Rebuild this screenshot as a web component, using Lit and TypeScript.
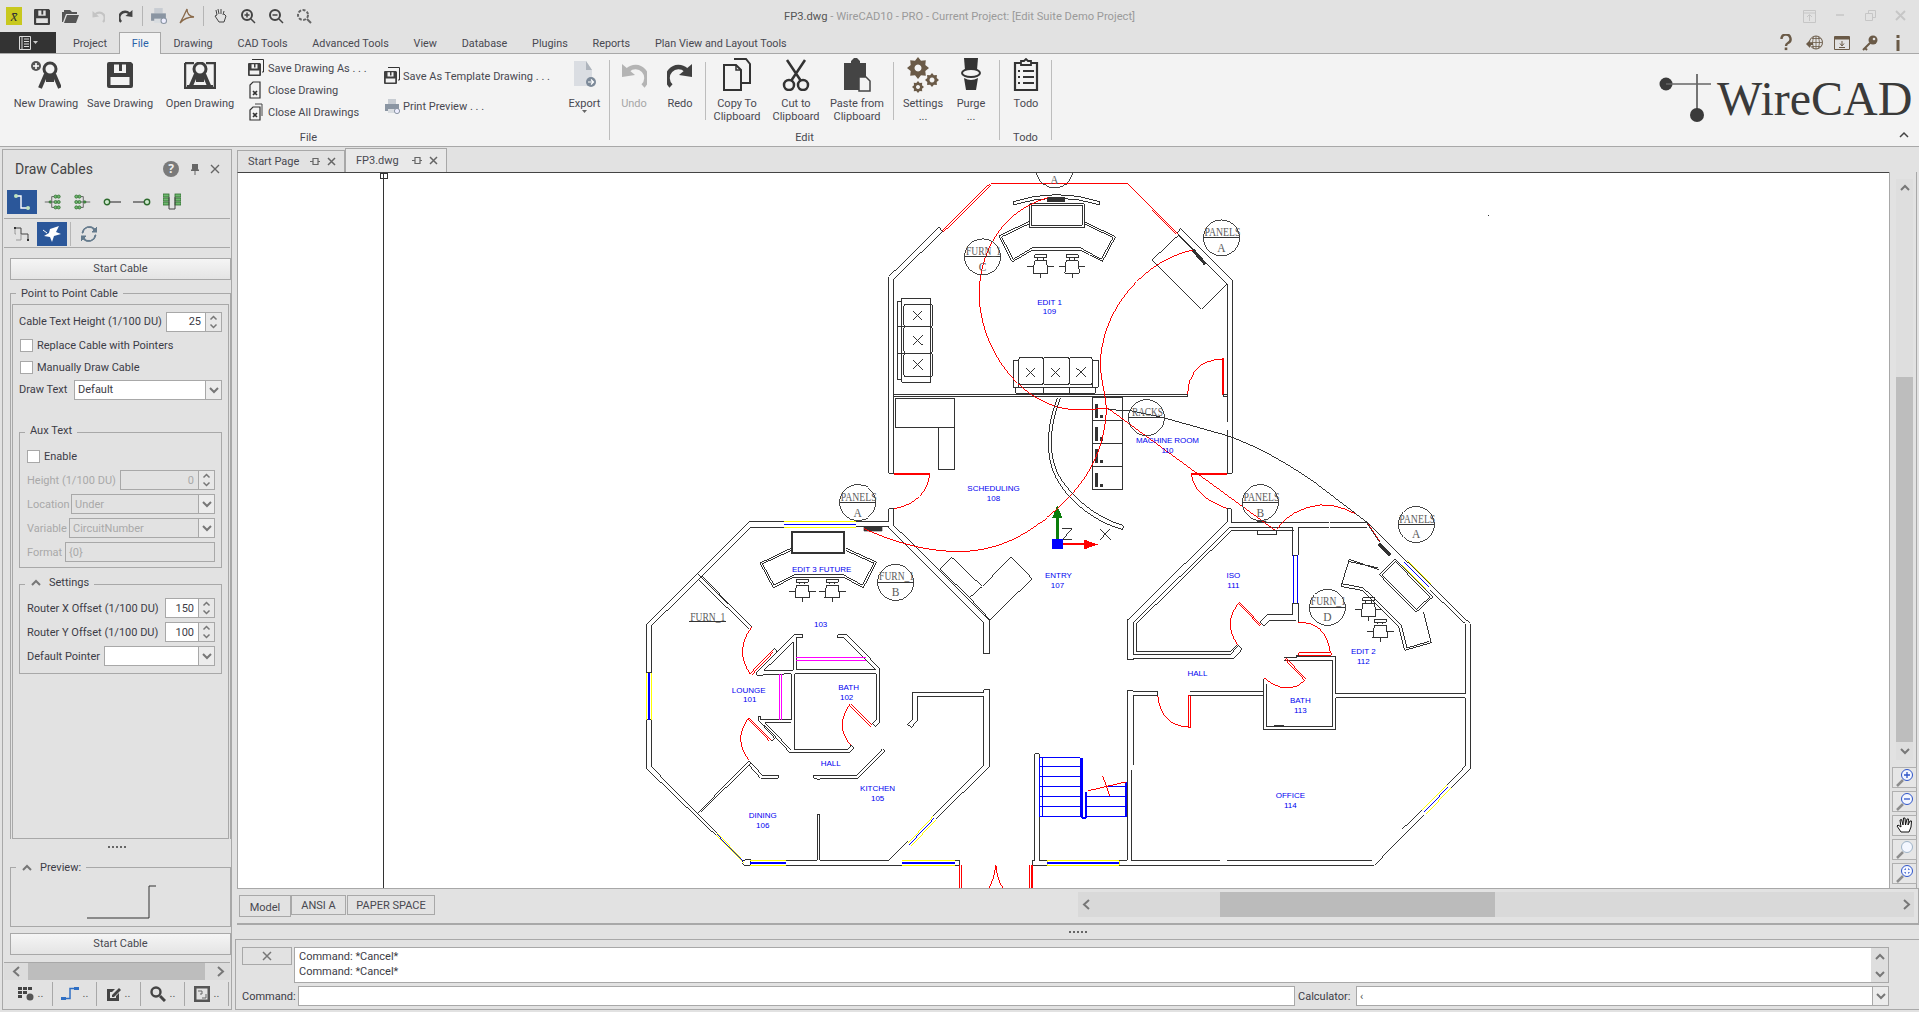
import { LitElement, html, svg, css } from "lit";
import { customElement } from "lit/decorators.js";

// drawing data: coordinates are in 3x crop space, one group per area of the plan
type Seg = [string, string];

const TOP_ROOM: Seg[] = [
  ["w", "M235 198L85 347V938H100"],
  ["w", "M245 212L100 355V700"],
  ["w", "M100 708V938"],
  ["w", "M960 202L1115 357V938H1100"],
  ["w", "M950 218L1100 370V700M1100 708V785M1100 808V938"],
  ["w", "M235 198L245 212M960 202L950 218"],
  ["r", "M390 68H802"],
  ["r", "M388 68L243 212M392 71L247 215"],
  ["r", "M802 68L950 218M874 147L946 220"],
  ["w", "M875 297L955 222L1098 368L1022 445Z"],
  ["k", "M998 268L1035 310"],
  ["w", "M100 700H982V708H100Z"],
  ["w", "M105 712H283V802H105ZM233 802H283V928H233Z"],
  ["w", "M695 710H787V988H695ZM695 780H787M695 850H787M695 918H787"],
  ["r", "M100 938H208M100 942H208M992 938H1100M992 942H1100"],
  ["r", "M1085 592H1090V700H1085ZM1085 595Q985 600 982 700"],
  ["w", "M1090 700H1100V708H1090Z"],
  ["w", "M458 122Q590 80 718 122L716 131Q590 92 460 131Z"],
  ["w", "M508 128H672V200H508ZM512 133H666V193H512Z"],
  ["w", "M505 182L415 225L455 303L515 268H660L725 303L765 228L672 182"],
  ["w", "M505 189L423 228L458 295L515 261H660L722 295L758 230L672 189"],
  ["w", "M124 412H210V665H124ZM110 422H124V655H110Z"],
  ["w", "M135 430H210Q215 430 215 436V492Q215 498 210 498H135Q130 498 130 492V436Q130 430 135 430Z"],
  ["w", "M135 498H210Q215 498 215 504V571Q215 577 210 577H135Q130 577 130 571V504Q130 498 135 498Z"],
  ["w", "M135 577H210Q215 577 215 583V642Q215 648 210 648H135Q130 648 130 642V583Q130 577 135 577Z"],
  ["w", "M110 498H130M110 577H130"],
  ["w", "M157 450L186 479M186 450L157 479M157 524L186 553M186 524L157 553M157 597L186 626M186 597L157 626"],
  ["w", "M458 598H475V680H458ZM695 598H714V680H695ZM466 680H704V698H466ZM548 680V698M626 680V698"],
  ["w", "M481 590H542Q548 590 548 596V666Q548 672 542 672H481Q475 672 475 666V596Q475 590 481 590Z"],
  ["w", "M554 590H620Q626 590 626 596V666Q626 672 620 672H554Q548 672 548 666V596Q548 590 554 590Z"],
  ["w", "M632 590H689Q695 590 695 596V666Q695 672 689 672H632Q626 672 626 666V596Q626 590 632 590Z"],
  ["w", "M495 620L524 649M524 620L495 649M571 620L600 649M600 620L571 649M646 620L676 649M676 620L646 649"],
];

const LEFT_WING: Seg[] = [
  ["w", "M490 124H385L77 432V865L285 1065M490 140H390L92 437V860L290 1060"],
  ["w", "M77 577H92M77 718H92"],
  ["y", "M490 124H705M490 140H705M77 577V718M92 577V718"],
  ["b2t", "M490 132H705M85 577V718"],
  ["w", "M705 124H805V85H820V135L1108 420V520H1090V425L805 138H705"],
  ["y", "M285 1065L370 1150M290 1060L362 1135"],
  ["b", "M288 1062L365 1142"],
  ["w", "M365 1145L375 1138H388V1156H370L365 1150"],
  ["y", "M388 1140H497M388 1156H497"],
  ["b2t", "M388 1148H497"],
  ["w", "M497 1140H590V1004H598V1140H805L862 1083M497 1156H845"],
  ["y", "M845 1140H1003M845 1156H1003"],
  ["b2t", "M845 1148H1003"],
  ["y", "M862 1090L938 1008M872 1098L945 1020"],
  ["b", "M866 1094L941 1014"],
  ["w", "M1003 1140H1018V1156H1003"],
  ["w", "M945 1018L1108 858V628H1090V638H875V720L862 733L872 742L890 722V650H1090V855L938 1008"],
  ["w", "M232 280L393 440M245 288L393 440M232 295L385 447"],
  ["w", "M232 998L385 842M240 998L390 848M385 842L425 885H472V895H420L385 855"],
  ["w", "M580 885H710L787 805L793 812L712 895H600L595 898L580 895Z"],
  ["w", "M408 585V575L410 575L520 463H547V472H527V568H765L670 472H652V463H678L778 565V725L765 740L757 730L767 720V580H523V808H680L692 795L700 803L685 818H508L432 735"],
  ["w", "M408 585L512 580V718H420V708H412V720L455 765L462 775L455 782L410 738"],
  ["w", "M512 727H432L510 808M430 570L518 485V570Z"],
  ["w", "M455 510L462 505L470 515"],
  ["m", "M527 532H735M527 540H735M475 580V718M482 580V718"],
  ["r", "M388 580L455 510M393 584L459 514M393 440Q340 510 388 580"],
  ["r", "M385 712L450 778M381 716L446 782M385 712Q335 775 385 840"],
  ["r", "M690 670L755 735M686 674L751 739M690 670Q640 735 690 795"],
  ["r", "M1018 1156V1225M1024 1156V1225M1228 1156V1225M1234 1156V1225M1126 1155Q1120 1200 1105 1225M1126 1155Q1130 1200 1148 1225"],
  ["w", "M512 152H672V220H512ZM515 155H669V217H515Z"],
  ["w", "M512 203L418 248L458 322L520 290H668L728 322L768 245L675 203"],
  ["w", "M512 210L425 250L460 314L520 283H668L725 314L760 248L675 210"],
  ["f", "M730 140H785V152H730Z"],
  ["w", "M958 265L993 230L1085 318L1172 230L1235 295L1108 418L1047 352ZM1047 352L1085 318"],
];

const RIGHT_WING: Seg[] = [
  ["w", "M680 85H693V125H985M990 125H1100M680 85V125L380 420V538H398V535H700L725 507L712 493"],
  ["w", "M688 140L398 428V523H690L712 497M693 150L408 430V515H690L712 493"],
  ["w", "M688 140H875V225H893V140H985M990 140H1100M693 150H880"],
  ["b", "M880 225V368M892 225V368"],
  ["w", "M875 368H893V428M875 368V403H800L780 425L790 438L807 420H888"],
  ["r", "M717 365L783 435M714 368L780 438M717 365Q665 430 712 493"],
  ["r", "M830 145Q870 85 960 73Q1040 72 1100 125L1140 185"],
  ["r", "M895 517H992M895 525H992M895 517V525M992 517V525M892 427Q975 420 990 517"],
  ["w", "M850 533H887V525H895M887 530H1007V640H1395V430L1290 330M995 540H852"],
  ["w", "M790 595V748H1007V652H1395V858L1340 915M798 610V740H995V540"],
  ["f", "M822 735H850V739H822ZM770 120H798V124H770Z"],
  ["r", "M852 535L913 600M856 532L917 597M913 600Q860 650 790 592"],
  ["w", "M380 632H398V635H472V646H398V855M380 632V1140M398 646V855M392 870V1140H660M680 1140H1115"],
  ["r", "M563 645V742H569V645ZM472 646Q480 735 563 740"],
  ["w", "M569 635H790M569 646H790"],
  ["w", "M357 1156H1122L1270 1005M1205 1048L1265 990M1100 125L1410 430V865L1350 925"],
  ["y", "M1265 990L1340 915M1278 1002L1350 925"],
  ["b", "M1270 996L1345 920"],
  ["y", "M1220 240L1292 312M1205 255L1278 328"],
  ["b", "M1212 247L1285 320"],
  ["k", "M1135 190L1170 225"],
  ["w", "M1137 283L1185 235L1297 350L1248 395ZM1145 283L1185 243L1289 350L1248 387Z"],
  ["w", "M1137 268L1047 237L1022 318L1085 330L1130 375L1195 440L1213 510L1293 487L1270 395"],
  ["w", "M1132 262L1045 243M1025 310L1088 322L1137 368L1203 435L1220 503L1287 483"],
  ["w", "M103 820H116V1140H140M103 820V1140H95V1156H140"],
  ["y", "M140 1140H357M140 1156H357M140 1140V1156M357 1140V1156"],
  ["b2t", "M140 1148H357"],
  ["w", "M357 1140H380"],
  ["r", "M88 1156V1225M95 1156V1225"],
  ["b", "M118 832H240V1010H118ZM127 832V1010M118 860H240M118 889H240M118 919H240M118 949H240M118 979H240"],
  ["b2", "M246 832V1012Q250 1018 257 1012V935"],
  ["b", "M258 949H378M258 979H378M258 1010H378M320 919H378"],
  ["b2", "M376 905V1010"],
  ["r", "M262 932L378 905M307 888L328 948"],
  ["w", "M185 145H215L185 178H215M298 145L330 178M330 145L298 178"],
  ["w", "M772 150H828V163H772Z"],
];

const ROOMS: [string, number, number, number?][] = [
  ["EDIT 1", 1049, 302], ["109", 1049, 311],
  ["MACHINE ROOM", 1167, 440, 9], ["110", 1167, 450, 9],
  ["SCHEDULING", 993, 488], ["108", 993, 498],
  ["EDIT 3 FUTURE", 821, 569], ["103", 820, 625],
  ["LOUNGE", 748, 691], ["101", 749, 700],
  ["BATH", 848, 688], ["102", 846, 698],
  ["HALL", 830, 764],
  ["KITCHEN", 877, 789], ["105", 877, 799],
  ["DINING", 762, 816], ["106", 762, 826],
  ["ENTRY", 1058, 575], ["107", 1057, 585],
  ["ISO", 1233, 575], ["111", 1233, 585],
  ["EDIT 2", 1363, 652], ["112", 1363, 662],
  ["HALL", 1197, 674],
  ["BATH", 1300, 701], ["113", 1300, 711],
  ["OFFICE", 1290, 796], ["114", 1290, 806],
];

const CALLOUTS: [number, number, string, string][] = [
  [1054, 169, "", "A"],
  [982, 256, "FURN_1", "C"],
  [1221, 237, "PANELS", "A"],
  [1146, 417, "RACKS", ""],
  [857, 502, "PANELS", "A"],
  [895, 582, "FURN_1", "B"],
  [1260, 502, "PANELS", "B"],
  [1416, 524, "PANELS", "A"],
  [1327, 607, "FURN_1", "D"],
];

const NOTE_W: Record<string, number> = { PANELS: 36, FURN_1: 35, RACKS: 31 };

const segs = (list: Seg[]) => list.map(([c, d]) => svg`<path class=${c} d=${d}></path>`);

const chair = (x: number, y: number) => svg`
  <path class="w" d="M${x - 18} ${y - 33}H${x + 18}V${y - 24}H${x - 18}ZM${x - 8} ${y - 24}V${y - 18}M${x + 8} ${y - 24}V${y - 18}"></path>
  <path class="w" d="M${x - 18} ${y - 16}H${x + 18}L${x + 22} ${y + 22}H${x - 22}ZM${x - 40} ${y + 3}H${x - 20}V${y + 8}M${x + 20} ${y + 3}H${x + 40}M${x} ${y + 22}V${y + 36}"></path>
`;

function gearPath(cx: number, cy: number, r: number) {
  let d = "";
  for (let i = 0; i < 16; i++) {
    const a = (i / 16) * Math.PI * 2;
    const rr = i % 2 === 0 ? r : r * 0.72;
    d += `${i ? "L" : "M"}${(cx + Math.cos(a) * rr).toFixed(1)} ${(cy + Math.sin(a) * rr).toFixed(1)}`;
  }
  return d + "Z";
}

@customElement("wc-floorplan")
export class WcFloorplan extends LitElement {
  static styles = css`
    :host {
      display: block;
      width: 100%;
      height: 100%;
    }
    svg {
      display: block;
      width: 100%;
      height: 100%;
      shape-rendering: crispEdges;
    }
    path {
      fill: none;
    }
    .w { stroke: #333; stroke-width: 3; }
    .r { stroke: #f00; stroke-width: 3; }
    .b { stroke: #00f; stroke-width: 3; }
    .b2 { stroke: #00f; stroke-width: 6; }
    .b2t { stroke: #00f; stroke-width: 5; }
    .y { stroke: #ff0; stroke-width: 3; }
    .m { stroke: #f0f; stroke-width: 3; }
    .k { stroke: #333; stroke-width: 10; }
    path.f { fill: #333; stroke: #333; stroke-width: 1; }
    .thin { stroke: #333; stroke-width: 1; fill: none; }
    .red { stroke: #f00; stroke-width: 1; fill: none; }
    .circ { stroke: #444; stroke-width: 1; fill: none; }
    .room { font: 8px "Liberation Sans", sans-serif; fill: #0000f0; text-anchor: middle; dominant-baseline: middle; }
    .note { font: 11.5px "Liberation Serif", serif; fill: #5a5a5a; text-anchor: middle; }
    .green { fill: #0b7d0b; }
    .blue { fill: #00f; }
    .redf { fill: #f00; }
    .dark { fill: #333; }
  `;

  render() {
    return html`<svg viewBox="237 172 1652 716" preserveAspectRatio="none">
      <path class="thin" d="M383 172V888"></path>
      <rect class="thin" x="379.5" y="172.5" width="7" height="5"></rect>
      <rect class="dark" x="1488" y="214" width="1" height="1"></rect>

      <g transform="translate(860 160) scale(.33333)">
        ${segs(TOP_ROOM)}
        <rect class="dark" x="560" y="108" width="55" height="14"></rect>
        ${chair(540, 315)}${chair(635, 315)}
        ${[730, 798, 866, 938].map((y) => svg`
          <rect class="dark" x="703" y=${y} width="9" height="42"></rect>
          <rect class="dark" x="720" y=${y + 32} width="9" height="10"></rect>`)}
      </g>
      <g transform="translate(620 480) scale(.33333)">
        ${segs(LEFT_WING)}
        ${chair(545, 330)}${chair(635, 330)}
      </g>
      <g transform="translate(1000 480) scale(.33333)">
        ${segs(RIGHT_WING)}
        ${chair(1105, 385)}${chair(1140, 450)}
        <rect class="green" x="166" y="110" width="8" height="68"></rect>
        <polygon class="green" points="155,112 170,75 186,112"></polygon>
        <rect class="blue" x="153" y="177" width="33" height="30"></rect>
        <rect class="redf" x="186" y="188" width="64" height="6"></rect>
        <polygon class="redf" points="250,177 292,192 250,207"></polygon>
      </g>

      <path class="red" d="M1047 197C1000 210 976 255 979 300C982 350 1020 405 1073 409L1108 408L1275 530"></path>
      <path class="red" d="M1193 249C1140 260 1098 315 1100 367C1101 385 1108 400 1105 420C1100 465 1075 495 1040 522C1010 545 980 552 953 551C920 550 890 540 863 528"></path>
      <path class="red" d="M1191 473C1193 490 1205 500 1227 508"></path>
      <path class="red" d="M929 473C928 490 915 505 893 508"></path>
      <path class="thin" d="M1057 397C1046 425 1044 455 1056 478C1066 497 1090 520 1122 529L1123 525C1092 516 1069 493 1059 476C1047 455 1049 425 1060 397"></path>
      <path class="thin" d="M1108 409L1130 410L1163 417L1227 435C1260 447 1285 462 1312 480L1367 522L1380 542"></path>

      ${CALLOUTS.map(([x, y, top, bottom]) => svg`
        <circle class="circ" cx=${x} cy=${y} r="18"></circle>
        <path class="thin" d="M${x - 18} ${y}H${x + 18}"></path>
        ${top ? svg`<text class="note" x=${x + 1} y=${y - 2} textLength=${NOTE_W[top]} lengthAdjust="spacingAndGlyphs">${top}</text>` : ""}
        <text class="note" x=${x} y=${y + 14}>${bottom}</text>`)}
      <text class="note" x="707" y="621" textLength="35" lengthAdjust="spacingAndGlyphs">FURN_1</text>
      <path class="thin" d="M688 621.5H725"></path>

      ${ROOMS.map(([t, x, y, s]) => s
        ? svg`<text class="room" x=${x} y=${y} font-size=${s} textLength=${t.length > 3 ? 63 : 12}>${t}</text>`
        : svg`<text class="room" x=${x} y=${y}>${t}</text>`)}
    </svg>`;
  }
}

/* small icons */
const chevUp = svg`<polyline points="2,7 6,3 10,7" fill="none" stroke="currentColor" stroke-width="2"></polyline>`;
const chevDown = svg`<polyline points="2,3 6,7 10,3" fill="none" stroke="currentColor" stroke-width="2"></polyline>`;
const chevLeft = svg`<polyline points="8,1 3,5.5 8,10" fill="none" stroke="currentColor" stroke-width="2"></polyline>`;
const chevRight = svg`<polyline points="3,1 8,5.5 3,10" fill="none" stroke="currentColor" stroke-width="2"></polyline>`;
const ico = (w: number, h: number, vb: string, body: unknown, cls = "") =>
  html`<svg class=${cls} width=${w} height=${h} viewBox=${vb}>${body}</svg>`;
const up = () => ico(12, 10, "0 0 12 10", chevUp, "ch");
const down = () => ico(12, 10, "0 0 12 10", chevDown, "ch");

const floppyBody = svg`<path fill="currentColor" fill-rule="evenodd" d="M2 0H24L26 2V24A2 2 0 0 1 24 26H2A2 2 0 0 1 0 24V2A2 2 0 0 1 2 0ZM7 2.5V11H19V2.5H15V9H12V2.5ZM3.5 15V23H22.5V15Z"></path>`;
const floppyLarge = () => ico(26, 26, "0 0 26 26", floppyBody, "dk");
const floppySmall = () => ico(16, 18, "0 0 32 36", svg`
  <path d="M8 1H31V26H28" fill="none" stroke="#333" stroke-width="2"></path>
  <g transform="translate(0 8)">${floppyBody}</g>`, "dk");

const compass = svg`
  <circle cx="19" cy="8" r="6" fill="none" stroke="currentColor" stroke-width="3"></circle>
  <path d="M15 13L9 27M23 13L29 27" stroke="currentColor" stroke-width="4" fill="none"></path>
  <rect x="15" y="15" width="8" height="6" fill="currentColor"></rect>`;

const newDrawing = () => ico(30, 28, "0 0 30 28", svg`
  <circle cx="5" cy="5" r="5" fill="#555"></circle>
  <path d="M5 2V8M2 5H8" stroke="#fff" stroke-width="1.6"></path>
  ${compass}`, "dk");
const openDrawing = () => ico(32, 27, "0 0 32 27", svg`
  <path d="M1 1H10M22 1H31V26H1V1M1 1" fill="none" stroke="currentColor" stroke-width="2.5"></path>
  <path d="M3 24H29" stroke="currentColor" stroke-width="2"></path>
  <g transform="translate(-3 -1)">${compass}</g>`, "dk");
const closeDoc = (stack: boolean) => ico(16, 18, "0 0 16 18", svg`
  ${stack ? svg`<path d="M7 1H14V13" fill="none" stroke="#444" stroke-width="1"></path>` : ""}
  <path d="M5 ${stack ? 4 : 1}H12V17H2V${stack ? 7 : 4}Z" fill="#f3f3f3" stroke="#333" stroke-width="1.2"></path>
  <path d="M5 10L9 14M9 10L5 14" stroke="#333" stroke-width="1.6"></path>`);
const printer = (w = 17, h = 17) => ico(w, h, "0 0 17 17", svg`
  <rect x="4" y="1" width="8" height="5" fill="#c7ccd2"></rect>
  <rect x="1" y="6" width="14" height="7" fill="#8a95a2"></rect>
  <rect x="4" y="11" width="8" height="4" fill="#d8dce0"></rect>
  <circle cx="13" cy="13" r="2.6" fill="#eef" stroke="#8a95a2"></circle>`);
const exportIcon = () => ico(24, 28, "0 0 24 28", svg`
  <path d="M1 0H13L19 9V25H1Z" fill="#dadde2"></path>
  <path d="M13 0L19 9H13Z" fill="#aeb4bc"></path>
  <circle cx="18" cy="21" r="5" fill="#7d8a99"></circle>
  <path d="M15 21H20M18 18.5L20.5 21L18 23.5" fill="none" stroke="#fff" stroke-width="1.2"></path>`);
const arcArrow = (size: number, color: string, flip: boolean) => ico(size, size, "0 0 26 26", svg`
  <g transform=${flip ? "translate(26 0) scale(-1 1)" : ""} fill=${color}>
    <path d="M4 24A10.500 10.500 0 0 1 19 8" fill="none" stroke=${color} stroke-width="4.500"></path>
    <polygon points="25,2 25,15 12,13"></polygon>
  </g>`);
const copyIcon = () => ico(30, 34, "0 0 30 34", svg`
  <path d="M12 1H24L28 6V25H20" fill="none" stroke="#333" stroke-width="2"></path>
  <path d="M2 7H14L19 12V32H2Z" fill="#f3f3f3" stroke="#333" stroke-width="2"></path>
  <path d="M14 7V12H19" fill="none" stroke="#333" stroke-width="1.500"></path>`);
const scissors = () => ico(28, 32, "0 0 28 32", svg`
  <path d="M5 1L19 22M23 1L9 22" stroke="#333" stroke-width="2.500" fill="none"></path>
  <circle cx="7" cy="26" r="5" fill="none" stroke="#333" stroke-width="2.500"></circle>
  <circle cx="21" cy="26" r="5" fill="none" stroke="#333" stroke-width="2.500"></circle>`);
const pasteIcon = () => ico(28, 34, "0 0 28 34", svg`
  <path d="M1 5H8V3L11 0H14L17 3V5H23V32H1Z" fill="#444"></path>
  <path d="M16 19H23L27 23V33H16Z" fill="#f3f3f3" stroke="#444" stroke-width="1.500"></path>`);
const gears = () => ico(32, 36, "0 0 32 36", svg`
  <path fill="#6a5a47" fill-rule="evenodd" d="${gearPath(11, 11, 11)}M11 7.500A3.500 3.500 0 1 0 11.010 7.500Z"></path>
  <path fill="#6a5a47" fill-rule="evenodd" d="${gearPath(25, 23, 7)}M25 20.500A2.500 2.500 0 1 0 25.010 20.500Z"></path>
  <path fill="#6a5a47" fill-rule="evenodd" d="${gearPath(11, 30, 6)}M11 28A2 2 0 1 0 11.010 28Z"></path>`);
const toilet = () => ico(20, 34, "0 0 20 34", svg`
  <path d="M3 0H17L16 12H4Z" fill="#333"></path>
  <ellipse cx="10" cy="15" rx="9" ry="4" fill="#f3f3f3" stroke="#333" stroke-width="2"></ellipse>
  <path d="M3 20Q10 24 17 20L15 32H5Z" fill="#333"></path>`);
const todoIcon = () => ico(26, 34, "0 0 26 34", svg`
  <path d="M8 5H2V32H24V5H18" fill="none" stroke="#333" stroke-width="2.200"></path>
  <path d="M8 7V3H11L13 1L15 3H18V7Z" fill="none" stroke="#333" stroke-width="1.800"></path>
  <path d="M5 13H7M10 13H21M5 19H7M10 19H21M5 25H7M10 25H21" stroke="#333" stroke-width="2"></path>`);

const plugNode = (flip: boolean, fork: boolean) => ico(17, 16, "0 0 22 20", svg`
  <g transform=${flip ? "translate(22 0) scale(-1 1)" : ""} fill="none" stroke="#444" stroke-width="1">
    <path d="M1 10H8"></path>
    <path d="M10 3V17M10 3H13M10 10H13M10 17H13"></path>
    ${fork ? svg`<circle cx="8" cy="10" r="1.500" fill="#4b9e4b" stroke="#2e6b2e"></circle>` : ""}
    <g fill="#6fb96f" stroke="#2e6b2e">
      <circle cx="15" cy="3" r="2"></circle><circle cx="19" cy="3" r="2"></circle>
      <circle cx="15" cy="10" r="2"></circle><circle cx="19" cy="10" r="2"></circle>
      <circle cx="15" cy="17" r="2"></circle><circle cx="19" cy="17" r="2"></circle>
    </g>
  </g>`);
const pin = (dir: boolean) => ico(20, 10, "0 0 20 10", svg`
  <g fill="none">
    <circle cx=${dir ? 15 : 5} cy="5" r="2.700" fill="#cfe8cf" stroke="#2e6b2e" stroke-width="1.400"></circle>
    <path d=${dir ? "M1 5H12" : "M8 5H19"} stroke="#444" stroke-width="1.200"></path>
  </g>`);
const magnifier = (body: unknown, ring = "#2f55c9") => ico(20, 20, "0 0 20 20", svg`
  <path d="M2 18L8 12" stroke="#8d8d8d" stroke-width="2.500"></path>
  <circle cx="12" cy="7" r="5.500" fill="#f4f7ff" stroke=${ring} stroke-width="1"></circle>
  ${body}`);
const tabX = () => ico(9, 9, "0 0 9 9", svg`<path d="M1 1L8 8M8 1L1 8" stroke="#666" stroke-width="1.500"></path>`);
const tabPin = () => ico(10, 9, "0 0 10 9", svg`<path d="M0 4.500H3M3 1.500H8V7.500H3ZM8 4.500H10" stroke="#666" fill="none" stroke-width="1.200"></path>`);

@customElement("app-root")
export class AppRoot extends LitElement {
  static styles = css`
    :host {
      display: block;
      width: 1919px;
      height: 1012px;
      overflow: hidden;
      background: #e2e2e2;
      color: #3c3c46;
      font: 11px/13px Roboto, "Noto Sans", sans-serif;
    }
    * { box-sizing: border-box; }
    svg { display: block; flex: none; }
    .dk { color: #3f3f3f; }
    .ch { color: #777; }

    /* title bar */
    .titlebar { display: flex; align-items: center; height: 32px; }
    .quick { display: flex; align-items: center; width: 784px; }
    .qslot { width: 28px; height: 20px; display: flex; align-items: center; justify-content: center; }
    .qsep { width: 1px; height: 20px; background: #b5b5b5; margin: 0 2px 0 2px; }
    .app { width: 16px; height: 18px; background: #c8c81e; color: #333; font: italic 15px/18px "Liberation Serif", serif; text-align: center; }
    .title { color: #9a9a9a; white-space: nowrap; font-size: 11.2px; }
    .title b { color: #555; font-weight: 400; }
    .winctl { display: flex; margin-left: auto; margin-right: 3px; color: #c6c6c6; }
    .winctl span { width: 30.500px; display: flex; justify-content: center; }

    /* menu */
    .menu { display: flex; height: 21px; }
    .appmenu { width: 56px; background: #333; display: flex; align-items: center; justify-content: center; gap: 2px; color: #ddd; }
    .mtabs { display: flex; margin-left: 4.600px; font-size: 10.8px; }
    .mtab { padding: 5px 12.400px 0; color: #484850; white-space: nowrap; }
    .mtab.on { color: #2a62a8; background: #f3f3f3; border: 1px solid #a8a8a8; border-bottom: 0; margin-bottom: -1px; padding: 4px 11.400px 0; position: relative; z-index: 1; }
    .mright { display: flex; margin-left: auto; margin-right: 7px; color: #6a5a47; }
    .mright span { width: 28px; height: 21px; display: flex; align-items: center; justify-content: center; }

    /* ribbon */
    .ribbon { display: flex; height: 94px; background: #f3f3f3; border-top: 1px solid #a8a8a8; border-bottom: 1px solid #a8a8a8; }
    .group { height: 80px; margin-top: 6px; border-right: 1px solid #bdbdbd; display: flex; flex-direction: column; flex: none; }
    .items { display: flex; height: 70px; flex: none; }
    .glabel { height: 16px; line-height: 16px; text-align: center; color: #484850; flex: none; }
    .g-file { width: 610px; padding-left: 8px; }
    .g-edit { width: 390px; }
    .g-todo { width: 52px; }
    .big { display: flex; flex-direction: column; align-items: center; text-align: center; flex: none; white-space: nowrap; color: #484850; }
    .slot { height: 30px; display: flex; align-items: center; justify-content: center; margin-bottom: 7px; }
    .big.off { color: #a6a6a6; }
    .w38 { width: 38px; } .w44 { width: 44px; } .w48 { width: 48px; } .w49 { width: 49px; }
    .w52 { width: 52px; } .w56 { width: 56px; } .w58 { width: 58px; } .w62 { width: 62px; }
    .w66 { width: 66px; } .w72 { width: 72px; } .w76 { width: 76px; } .w88 { width: 88px; }
    .vsep { width: 1px; height: 58px; background: #bdbdbd; margin: 2px 0 0 3px; flex: none; }
    .col1 { width: 136px; margin-left: 4px; margin-top: -3px; display: flex; flex-direction: column; flex: none; }
    .col1 .row { height: 22px; }
    .col2 { width: 176px; display: flex; flex-direction: column; flex: none; }
    .col2 .row { height: 30px; }
    .col2 .row:first-child { margin-top: 1px; }
    .row { display: flex; align-items: center; white-space: nowrap; color: #484850; }
    .rico { width: 16px; display: flex; justify-content: center; margin-right: 4px; }
    .col2 .rico { margin-right: 3px; }
    .logo { margin-left: auto; }
    .logo text { font: 48px "Liberation Serif", serif; fill: #3a3a3a; }

    /* side panel */
    .body { display: flex; height: 865px; }
    .side { width: 230px; height: 861px; margin: 2px 0 0 2px; border: 1px solid #a8a8a8; display: flex; flex-direction: column; flex: none; }
    .shead { display: flex; align-items: center; height: 38px; padding-left: 12px; flex: none; }
    .shead .t { font-size: 14px; color: #444; }
    .shead .help { width: 16px; height: 16px; border-radius: 50%; background: #7a7a7a; color: #eee; font: bold 12px/16px "Noto Sans", sans-serif; text-align: center; margin-left: auto; }
    .shead .pinx { margin-left: 12px; }
    .shead .closex { margin: 0 11px 0 11px; }
    .tools { display: flex; height: 31px; padding: 2px 0 0 3px; border-bottom: 1px solid #a8a8a8; margin: 0 1px; flex: none; }
    .tools.second { height: 29px; padding-top: 3px; }
    .tbtn { width: 30px; height: 24px; display: flex; align-items: center; justify-content: center; flex: none; }
    .tbtn.on { background: #2b579a; }
    .tools .vbar { width: 1px; height: 24px; background: #b5b5b5; margin: 0 3px; }
    .startbtn { width: 221px; height: 22px; margin-left: 7px; border: 1px solid #a8a8a8; background: linear-gradient(#f5f5f5, #e4e4e4); text-align: center; line-height: 20px; color: #484850; flex: none; }
    .first-start { margin-top: 10px; }
    .box { border: 1px solid #a8a8a8; position: relative; flex: none; }
    .box > .legend { position: absolute; top: -7px; left: 5px; padding: 0 5px; background: #e2e2e2; display: flex; align-items: center; gap: 7px; white-space: nowrap; }
    .aux > .legend, .sets > .legend { top: -9px; }
    .outer { width: 221px; height: 546px; margin: 13px 0 0 7px; padding: 10px 1px 0 1px; border-bottom: 0; }
    .inner { width: 217px; height: 535px; padding: 7px 6px 0 6px; }
    .field { display: flex; align-items: center; height: 19px; justify-content: space-between; white-space: nowrap; }
    .field.dis { color: #a9a9a9; }
    .mt6 { margin-top: 6px; } .mt8 { margin-top: 8px; } .mt33 { margin-top: 33px; } .mt16 { margin-top: 16px; }
    .check { display: flex; align-items: center; height: 13px; gap: 4px; margin-left: 1px; }
    .check + .check { margin-top: 9px; }
    .cb { width: 13px; height: 13px; background: #fff; border: 1px solid #a8a8a8; flex: none; }
    .spin, .combo, .plain { display: flex; height: 20px; border: 1px solid #a8a8a8; background: #fff; flex: none; align-items: center; }
    .dis .spin, .dis .combo, .dis .plain { background: #e2e2e2; }
    .spin .val { flex: 1; text-align: right; padding-right: 4px; }
    .combo .val, .plain .val { flex: 1; padding-left: 3px; }
    .spin .btns { width: 16px; height: 100%; border-left: 1px solid #a8a8a8; background: #e8e8e8; display: flex; flex-direction: column; align-items: center; justify-content: center; }
    .spin .btns svg { width: 9px; height: 8px; }
    .combo .drop { width: 16px; height: 100%; border-left: 1px solid #a8a8a8; background: #ececec; display: flex; align-items: center; justify-content: center; }
    .w56f { width: 56px; } .w49f { width: 50px; } .w94f { width: 95px; } .w148f { width: 148px; }
    .w144f { width: 144px; } .w146f { width: 146px; } .w150f { width: 150px; } .w111f { width: 111px; }
    .aux { width: 203px; height: 136px; padding: 17px 6px 0 7px; }
    .aux .field + .field { margin-top: 4px; height: 20px; }
    .aux .field { height: 20px; }
    .aux .check { margin: 0 0 7px 0; }
    .sets { width: 203px; height: 90px; padding: 13px 6px 0 7px; }
    .sets .field { height: 20px; }
    .sets .field + .field { margin-top: 4px; }
    .dots { height: 28px; display: flex; align-items: flex-start; justify-content: center; gap: 2px; padding-top: 7px; flex: none; }
    .dots i { width: 2px; height: 2px; background: #666; }
    .preview { width: 221px; height: 60px; margin-left: 7px; }
    .preview > svg { margin-top: 17px; margin-left: 75px; }
    .sideend { margin-top: 6px; }
    .hbar { display: flex; align-items: center; height: 18px; margin: 7px 1px 0; border-top: 1px solid #a8a8a8; background: #dcdcdc; padding: 0 4px 0 7px; flex: none; }
    .hbar .thumb { height: 100%; width: 184px; background: #bdbdbd; margin: 0 10px 0 6px; }
    .dtabs { display: flex; height: 27px; align-items: center; padding-left: 6px; flex: none; }
    .dtabs span { width: 44px; height: 24px; display: flex; align-items: center; justify-content: center; gap: 4px; border-right: 1px solid #a8a8a8; color: #555; }

    /* main column */
    .main { width: 1683px; margin-left: 4px; display: flex; flex-direction: column; flex: none; }
    .dochead { display: flex; height: 25px; align-items: flex-end; padding-left: 1px; flex: none; }
    .doc { display: flex; align-items: center; height: 22px; border: 1px solid #a8a8a8; border-bottom: 0; padding-left: 10px; color: #484850; white-space: nowrap; flex: none; }
    .doc.first { width: 108px; }
    .doc.active { width: 102px; height: 24px; background: #e9e9e9; }
    .doc .pn { margin-left: auto; }
    .doc .cl { margin: 0 8px 0 7px; }
    .canvasrow { display: flex; height: 716px; padding-left: 1px; flex: none; }
    .canvas { width: 1652px; height: 716px; background: #fff; border-top: 1px solid #444; border-left: 1px solid #a8a8a8; flex: none; }
    .vscroll { width: 28px; border-left: 1px solid #a8a8a8; border-right: 1px solid #a8a8a8; padding: 7px 0 0 1px; display: flex; flex-direction: column; flex: none; }
    .track { width: 17px; height: 581px; margin-left: 5px; background: #dedede; display: flex; flex-direction: column; align-items: center; flex: none; }
    .track .cap { height: 18px; display: flex; align-items: center; justify-content: center; flex: none; }
    .track .thumb { width: 100%; height: 367px; margin-top: 180px; background: #bdbdbd; }
    .zoombtn { width: 25px; height: 21px; margin: 3px 0 0 1px; border: 1px solid #b0b0b0; display: flex; align-items: center; justify-content: center; background: #e6e6e6; flex: none; }
    .track + .zoombtn { margin-top: 7px; }
    .sheets { display: flex; height: 37px; width: 1682px; margin-left: 1px; border-top: 1px solid #a8a8a8; border-bottom: 2px solid #a8a8a8; border-right: 1px solid #a8a8a8; flex: none; }
    .stabs { display: flex; align-items: flex-start; padding: 6px 0 0 2px; }
    .stab { height: 20px; border: 1px solid #a8a8a8; display: flex; align-items: center; justify-content: center; color: #484850; flex: none; }
    .stab.on { width: 52px; height: 22px; padding-top: 2px; }
    .stab.a { width: 55px; }
    .stab.p { width: 88px; margin-left: 1px; }
    .hscroll { display: flex; align-items: center; width: 836px; height: 25px; margin: 3px 4px 0 auto; background: #d9d9d9; }
    .hscroll .thumb { width: 275px; height: 100%; background: #bbb; margin: 0 0 0 128px; }
    .hscroll .end { margin-left: auto; margin-right: 2px; }
    .hscroll svg { color: #777; }
    .hscroll > svg:first-child { margin-left: 3px; }
    .sdots { height: 14px; padding-top: 6px; }
    .cmd { height: 71px; margin-left: -1px; border-top: 1px solid #a8a8a8; border-left: 1px solid #a8a8a8; border-bottom: 1px solid #a8a8a8; padding: 7px 0 0 6px; flex: none; width: 1684px; }
    .cmdtop { display: flex; gap: 2px; align-items: flex-start; }
    .cancel { width: 50px; height: 18px; border: 1px solid #a8a8a8; display: flex; align-items: center; justify-content: center; flex: none; }
    .hist { width: 1595px; height: 36px; background: #fff; border: 1px solid #a8a8a8; display: flex; flex: none; }
    .hist .lines { flex: 1; padding: 1px 0 0 4px; line-height: 15px; }
    .hist .sb { width: 17px; background: #dedede; display: flex; flex-direction: column; align-items: center; justify-content: space-around; }
    .cmdrow { display: flex; align-items: center; margin-top: 3px; }
    .cmdrow .lbl { width: 56px; }
    .cmdrow .plain { width: 997px; }
    .cmdrow .lbl2 { margin-left: 3px; width: 58px; }
    .cmdrow .combo { width: 533px; }
    .cmdrow .combo .val { color: #555; }
  `;

  private spin(val: string, w: string) {
    return html`<div class="spin ${w}">
      <span class="val">${val}</span>
      <span class="btns">${up()}${down()}</span>
    </div>`;
  }

  private combo(val: string, w: string) {
    return html`<div class="combo ${w}">
      <span class="val">${val}</span>
      <span class="drop">${down()}</span>
    </div>`;
  }

  private big(icon: unknown, label: unknown, w: string, off = false) {
    return html`<div class="big ${w} ${off ? "off" : ""}">
      <div class="slot">${icon}</div>
      <div>${label}</div>
    </div>`;
  }

  private renderTitle() {
    const mini = (a: unknown) => html`<div class="qslot">${a}</div>`;
    return html`<div class="titlebar">
      <div class="quick">
        <div class="qslot"><div class="app">x̄</div></div>
        ${mini(ico(16, 18, "0 0 26 29", svg`<g transform="translate(0 3)">${floppyBody}</g>`, "dk"))}
        ${mini(ico(17, 14, "0 0 17 14", svg`<path d="M0 3H2V1H8L10 3H15V5H4L1 13H0ZM5 6H17L14 14H2Z" fill="#555"></path>`))}
        ${mini(arcArrow(13, "#c4c4c4", true))}
        ${mini(arcArrow(14, "#444", false))}
        <div class="qsep"></div>
        ${mini(printer(18, 18))}
        ${mini(ico(16, 16, "0 0 16 16", svg`<path d="M8 1Q5 8 1 15Q6 9 15 9Q8 8 8 1Z" fill="none" stroke="#8a6a4a" stroke-width="1.300"></path>`))}
        <div class="qsep"></div>
        ${mini(ico(15, 16, "0 0 15 16", svg`<path d="M4 7L3 2M6 6L5 1M8 6V1M10 7L11 3M4 7L2 8L6 14H11L13 8L11 6" fill="none" stroke="#444"></path>`))}
        ${mini(ico(16, 16, "0 0 16 16", svg`<circle cx="7" cy="7" r="5" fill="none" stroke="#444" stroke-width="2"></circle><path d="M4.500 7H9.500M7 4.500V9.500M11 11L15 15" stroke="#444" stroke-width="1.500"></path>`))}
        ${mini(ico(16, 16, "0 0 16 16", svg`<circle cx="7" cy="7" r="5" fill="none" stroke="#444" stroke-width="2"></circle><path d="M4.500 7H9.500M11 11L15 15" stroke="#444" stroke-width="1.500"></path>`))}
        ${mini(ico(16, 16, "0 0 16 16", svg`<circle cx="7" cy="7" r="5" fill="none" stroke="#666" stroke-width="2" stroke-dasharray="3 1.500"></circle><path d="M11 11L15 15" stroke="#666" stroke-width="2"></path>`))}
      </div>
      <div class="title"><b>FP3.dwg</b> - WireCAD10 - PRO - Current Project: [Edit Suite Demo Project]</div>
      <div class="winctl">
        <span>${ico(13, 13, "0 0 13 13", svg`<path d="M.5.500H12.500V12.500H.5ZM1 3H12M6.500 11V5M4 7L6.500 4.500L9 7" fill="none" stroke="currentColor"></path>`)}</span>
        <span>${ico(8, 8, "0 0 8 8", svg`<path d="M0 5H8" stroke="currentColor" stroke-width="1.500"></path>`)}</span>
        <span>${ico(11, 11, "0 0 11 11", svg`<path d="M.5 3.500H7.500V10.500H.5ZM3.500 3V.5H10.500V7.500H8" fill="none" stroke="currentColor"></path>`)}</span>
        <span>${ico(11, 11, "0 0 11 11", svg`<path d="M1 1L10 10M10 1L1 10" stroke="currentColor" stroke-width="1.800"></path>`)}</span>
      </div>
    </div>`;
  }

  private renderMenu() {
    return html`<div class="menu">
      <div class="appmenu">
        ${ico(12, 14, "0 0 12 14", svg`<path d="M.5.500H11.500V13.500H.5ZM5 3H10M5 5.500H10M5 8H10M5 10.500H10M3 1V13" fill="none" stroke="#ddd"></path>`)}
        ${ico(5, 3, "0 0 5 3", svg`<path d="M0 0H5L2.500 3Z" fill="#ccc"></path>`)}
      </div>
      <div class="mtabs">
        <div class="mtab">Project</div>
        <div class="mtab on">File</div>
        ${["Drawing", "CAD Tools", "Advanced Tools", "View", "Database", "Plugins", "Reports", "Plan View and Layout Tools"].map(
          (t) => html`<div class="mtab">${t}</div>`
        )}
      </div>
      <div class="mright">
        <span>${ico(12, 17, "0 0 12 17", svg`<path d="M1.500 5A4.500 4.500 0 1 1 8 9Q6 10 6 12" fill="none" stroke="currentColor" stroke-width="2.400"></path><rect x="4.700" y="13.500" width="2.600" height="2.600" fill="currentColor"></rect>`)}</span>
        <span>${ico(17, 15, "0 0 17 15", svg`<circle cx="10" cy="7.500" r="6.500" fill="none" stroke="currentColor"></circle><path d="M10 1V14M4 7.500H16.500M6 3.500H14.500M6 11.500H14.500M7.500 1.500Q5.500 7.500 7.500 13.500M12.500 1.500Q14.500 7.500 12.500 13.500" fill="none" stroke="currentColor" stroke-width=".8"></path><path d="M0 9L4 5V8H7V10H4V13Z" fill="currentColor"></path>`)}</span>
        <span>${ico(16, 14, "0 0 16 14", svg`<path d="M.5.500H15.500V13.500H.5Z" fill="none" stroke="currentColor"></path><path d="M1 1H15V3.500H1Z" fill="currentColor"></path><path d="M8 5V9M6 7.500L8 10L10 7.500M5 11.500H11" stroke="currentColor" fill="none"></path>`)}</span>
        <span>${ico(16, 16, "0 0 16 16", svg`<circle cx="11" cy="5" r="4.500" fill="currentColor"></circle><circle cx="12" cy="4" r="1.300" fill="#e2e2e2"></circle><path d="M8 8L1 15M3 13L5 15" stroke="currentColor" stroke-width="2" fill="none"></path>`)}</span>
        <span>${ico(4, 16, "0 0 4 16", svg`<rect x=".5" y="0" width="3" height="3" fill="currentColor"></rect><rect x=".5" y="5" width="3" height="11" fill="currentColor"></rect>`)}</span>
      </div>
    </div>`;
  }

  private renderRibbon() {
    return html`<div class="ribbon">
      <div class="group g-file">
        <div class="items">
          ${this.big(newDrawing(), "New Drawing", "w76")}
          ${this.big(floppyLarge(), "Save Drawing", "w72")}
          ${this.big(openDrawing(), "Open Drawing", "w88")}
          <div class="col1">
            <div class="row"><span class="rico">${floppySmall()}</span>Save Drawing As . . .</div>
            <div class="row"><span class="rico">${closeDoc(false)}</span>Close Drawing</div>
            <div class="row"><span class="rico">${closeDoc(true)}</span>Close All Drawings</div>
          </div>
          <div class="col2">
            <div class="row"><span class="rico">${floppySmall()}</span>Save As Template Drawing . . .</div>
            <div class="row"><span class="rico">${printer()}</span>Print Preview . . .</div>
          </div>
          <div class="big w49">
            <div class="slot">${exportIcon()}</div>
            <div>Export</div>
            ${ico(5, 3, "0 0 5 3", svg`<path d="M0 0H5L2.500 3Z" fill="#666"></path>`)}
          </div>
        </div>
        <div class="glabel">File</div>
      </div>
      <div class="group g-edit">
        <div class="items">
          ${this.big(arcArrow(26, "#b4b4b4", true), "Undo", "w48", true)}
          ${this.big(arcArrow(26, "#404040", false), "Redo", "w44")}
          <div class="vsep"></div>
          ${this.big(copyIcon(), html`Copy To<br />Clipboard`, "w62")}
          ${this.big(scissors(), html`Cut to<br />Clipboard`, "w56")}
          ${this.big(pasteIcon(), html`Paste from<br />Clipboard`, "w66")}
          <div class="vsep"></div>
          ${this.big(gears(), html`Settings<br />...`, "w58")}
          ${this.big(toilet(), html`Purge<br />...`, "w38")}
        </div>
        <div class="glabel">Edit</div>
      </div>
      <div class="group g-todo">
        <div class="items">${this.big(todoIcon(), "Todo", "w52")}</div>
        <div class="glabel">Todo</div>
      </div>
      <svg class="logo" width="260" height="92" viewBox="1659 54 260 92">
        <circle cx="1666" cy="84" r="6.500" fill="#3a3a3a"></circle>
        <path d="M1666 84H1711" stroke="#666" stroke-width="1.500"></path>
        <path d="M1697 74V112" stroke="#666" stroke-width="1.800"></path>
        <circle cx="1697" cy="115" r="7" fill="#3a3a3a"></circle>
        <text x="1717" y="115">WireCAD</text>
        <polyline points="1900,137 1904,133 1908,137" fill="none" stroke="#444" stroke-width="1.500"></polyline>
      </svg>
    </div>`;
  }

  private renderSide() {
    return html`<div class="side">
      <div class="shead">
        <span class="t">Draw Cables</span>
        <span class="help">?</span>
        <span class="pinx">${ico(8, 11, "0 0 8 11", svg`<path d="M1.500 0H6.500V5L8 6.500H0L1.500 5ZM4 6.500V11" fill="#666" stroke="#666"></path>`)}</span>
        <span class="closex">${ico(10, 10, "0 0 10 10", svg`<path d="M1 1L9 9M9 1L1 9" stroke="#666" stroke-width="1.400"></path>`)}</span>
      </div>
      <div class="tools">
        <div class="tbtn on">${ico(18, 18, "0 0 18 18", svg`<path d="M4 3H8V15H14" fill="none" stroke="#fff" stroke-width="1.400"></path><circle cx="3" cy="3" r="2" fill="#bfe3bf"></circle><circle cx="15" cy="15" r="2" fill="#bfe3bf"></circle>`)}</div>
        <div class="tbtn">${plugNode(false, true)}</div>
        <div class="tbtn">${plugNode(true, true)}</div>
        <div class="tbtn">${pin(false)}</div>
        <div class="tbtn">${pin(true)}</div>
        <div class="tbtn">${ico(18, 18, "0 0 18 18", svg`<g fill="#6fb96f" stroke="#2e6b2e" stroke-width=".8"><rect x="0" y="1" width="6" height="3"></rect><rect x="0" y="5" width="6" height="3"></rect><rect x="0" y="9" width="6" height="3"></rect><rect x="12" y="1" width="6" height="3"></rect><rect x="12" y="5" width="6" height="3"></rect><rect x="12" y="9" width="6" height="3"></rect></g><path d="M6 4V16H12V4" fill="none" stroke="#444"></path>`)}</div>
      </div>
      <div class="tools second">
        <div class="tbtn">${ico(18, 18, "0 0 18 18", svg`<path d="M2 3H8V9H15V16" fill="none" stroke="#444"></path><path d="M2 3V9H3M8 15V9M3 15H8" fill="none" stroke="#999"></path><rect x="1" y="2" width="2" height="2" fill="#333"></rect><rect x="14" y="14" width="2" height="2" fill="#333"></rect>`)}</div>
        <div class="tbtn on">${ico(20, 18, "0 0 20 18", svg`<path d="M8 4L17 1L14 7L19 9L12 11L10 17L8 12L2 11L7 8Z" fill="#fff"></path><path d="M1 5L5 8" stroke="#fff"></path>`)}</div>
        <div class="vbar"></div>
        <div class="tbtn">${ico(16, 16, "0 0 16 16", svg`<path d="M2 7A6 6 0 0 1 13 4L11 6H16V1L14 3A7.500 7.500 0 0 0 1 7ZM14 9A6 6 0 0 1 3 12L5 10H0V15L2 13A7.500 7.500 0 0 0 15 9Z" fill="#647a8c" stroke="#647a8c" stroke-width="1"></path>`)}</div>
      </div>
      <div class="startbtn first-start">Start Cable</div>

      <div class="box outer">
        <div class="legend">Point to Point Cable</div>
        <div class="box inner">
          <div class="field">Cable Text Height (1/100 DU)${this.spin("25", "w56f")}</div>
          <div class="check mt8"><span class="cb"></span>Replace Cable with Pointers</div>
          <div class="check"><span class="cb"></span>Manually Draw Cable</div>
          <div class="field mt6">Draw Text${this.combo("Default", "w148f")}</div>

          <div class="box aux mt33">
            <div class="legend">Aux Text</div>
            <div class="check"><span class="cb"></span>Enable</div>
            <div class="field dis">Height  (1/100 DU)${this.spin("0", "w94f")}</div>
            <div class="field dis">Location${this.combo("Under", "w144f")}</div>
            <div class="field dis">Variable${this.combo("CircuitNumber", "w146f")}</div>
            <div class="field dis">Format<div class="plain w150f"><span class="val">{0}</span></div></div>
          </div>

          <div class="box sets mt16">
            <div class="legend">${up()}Settings</div>
            <div class="field">Router X Offset  (1/100 DU)${this.spin("150", "w49f")}</div>
            <div class="field">Router Y Offset  (1/100 DU)${this.spin("100", "w49f")}</div>
            <div class="field">Default Pointer${this.combo("", "w111f")}</div>
          </div>
        </div>
      </div>

      <div class="dots">${[0, 1, 2, 3, 4].map(() => html`<i></i>`)}</div>
      <div class="box preview">
        <div class="legend">${up()}Preview:</div>
        ${ico(72, 34, "0 0 72 34", svg`<path d="M1 33H63V1H70" fill="none" stroke="#333" stroke-width="1"></path>`)}
      </div>
      <div class="startbtn sideend">Start Cable</div>
      <div class="hbar">
        ${ico(11, 11, "0 0 11 11", chevLeft, "ch")}
        <div class="thumb"></div>
        ${ico(11, 11, "0 0 11 11", chevRight, "ch")}
      </div>
      <div class="dtabs">
        <span>${ico(16, 14, "0 0 16 14", svg`<g fill="#444"><rect x="0" y="0" width="4" height="3"></rect><rect x="5" y="0" width="4" height="3"></rect><rect x="10" y="0" width="4" height="3"></rect><rect x="0" y="4" width="4" height="3"></rect><rect x="5" y="4" width="4" height="3"></rect><rect x="0" y="8" width="4" height="3"></rect></g><circle cx="12" cy="10" r="3.500" fill="#555"></circle>`)}..</span>
        <span>${ico(18, 13, "0 0 18 13", svg`<rect x="0" y="10" width="5" height="3" fill="#2f6fc4"></rect><rect x="13" y="0" width="5" height="3" fill="#2f6fc4"></rect><path d="M5 11.500H9V1.500H13" stroke="#2f6fc4" fill="none" stroke-width="1.500"></path>`)}..</span>
        <span>${ico(14, 14, "0 0 14 14", svg`<path d="M0 2H8L5 5H3V11H9V9L12 6V14H0ZM5 8L12 1L14 3L7 10H5Z" fill="#444"></path>`)}..</span>
        <span>${ico(16, 16, "0 0 16 16", svg`<circle cx="6" cy="6" r="4.500" fill="none" stroke="#444" stroke-width="2.400"></circle><path d="M10 10L15 15" stroke="#444" stroke-width="3"></path>`)}..</span>
        <span>${ico(16, 16, "0 0 16 16", svg`<path d="M0 0H16V16H0ZM2.500 2.500V13.500H13.500V2.500Z" fill="#555" fill-rule="evenodd"></path><path d="M4 5H8V8H6M12 8V12H8" stroke="#666" fill="none"></path>`)}..</span>
      </div>
    </div>`;
  }

  private renderMain() {
    return html`<div class="main">
      <div class="dochead">
        <div class="doc first">
          Start Page
          <span class="pn">${tabPin()}</span>
          <span class="cl">${tabX()}</span>
        </div>
        <div class="doc active">
          FP3.dwg
          <span class="pn">${tabPin()}</span>
          <span class="cl">${tabX()}</span>
        </div>
      </div>
      <div class="canvasrow">
        <div class="canvas"><wc-floorplan></wc-floorplan></div>
        <div class="vscroll">
          <div class="track">
            <div class="cap">${up()}</div>
            <div class="thumb"></div>
            <div class="cap">${down()}</div>
          </div>
          <div class="zoombtn">${magnifier(svg`<path d="M9 7H15M12 4V10" stroke="#2f55c9" stroke-width="1.300"></path>`)}</div>
          <div class="zoombtn">${magnifier(svg`<path d="M9 7H15" stroke="#2f55c9" stroke-width="1.300"></path>`)}</div>
          <div class="zoombtn">${ico(17, 17, "0 0 17 17", svg`<path d="M5 15L1 9L2 8L5 10L4 3L5.500 2.500L7 8L7.500 1H9L9.500 8L11 2H12.500L12 8L14 4H15.500L15 10L13 15Z" fill="#fff" stroke="#111" stroke-width="1"></path>`)}</div>
          <div class="zoombtn">${magnifier("", "#9fb4c8")}</div>
          <div class="zoombtn">${magnifier(svg`<path d="M10 6V5H11M14 6V5H13M10 8V9H11M14 8V9H13" stroke="#2f55c9" fill="none"></path>`)}</div>
        </div>
      </div>
      <div class="sheets">
        <div class="stabs">
          <div class="stab on">Model</div>
          <div class="stab a">ANSI A</div>
          <div class="stab p">PAPER SPACE</div>
        </div>
        <div class="hscroll">
          ${ico(11, 11, "0 0 11 11", chevLeft)}
          <div class="thumb"></div>
          <span class="end">${ico(11, 11, "0 0 11 11", chevRight)}</span>
        </div>
      </div>
      <div class="dots sdots">${[0, 1, 2, 3, 4].map(() => html`<i></i>`)}</div>
      <div class="cmd">
        <div class="cmdtop">
          <div class="cancel">${ico(10, 10, "0 0 10 10", svg`<path d="M1 1L9 9M9 1L1 9" stroke="#777" stroke-width="1.500"></path>`)}</div>
          <div class="hist">
            <div class="lines">Command: *Cancel*<br />Command: *Cancel*</div>
            <div class="sb">${up()}${down()}</div>
          </div>
        </div>
        <div class="cmdrow">
          <span class="lbl">Command:</span>
          <div class="plain"></div>
          <span class="lbl2">Calculator:</span>
          ${this.combo("‹", "")}
        </div>
      </div>
    </div>`;
  }

  render() {
    return html`
      ${this.renderTitle()}
      ${this.renderMenu()}
      ${this.renderRibbon()}
      <div class="body">
        ${this.renderSide()}
        ${this.renderMain()}
      </div>
    `;
  }
}
